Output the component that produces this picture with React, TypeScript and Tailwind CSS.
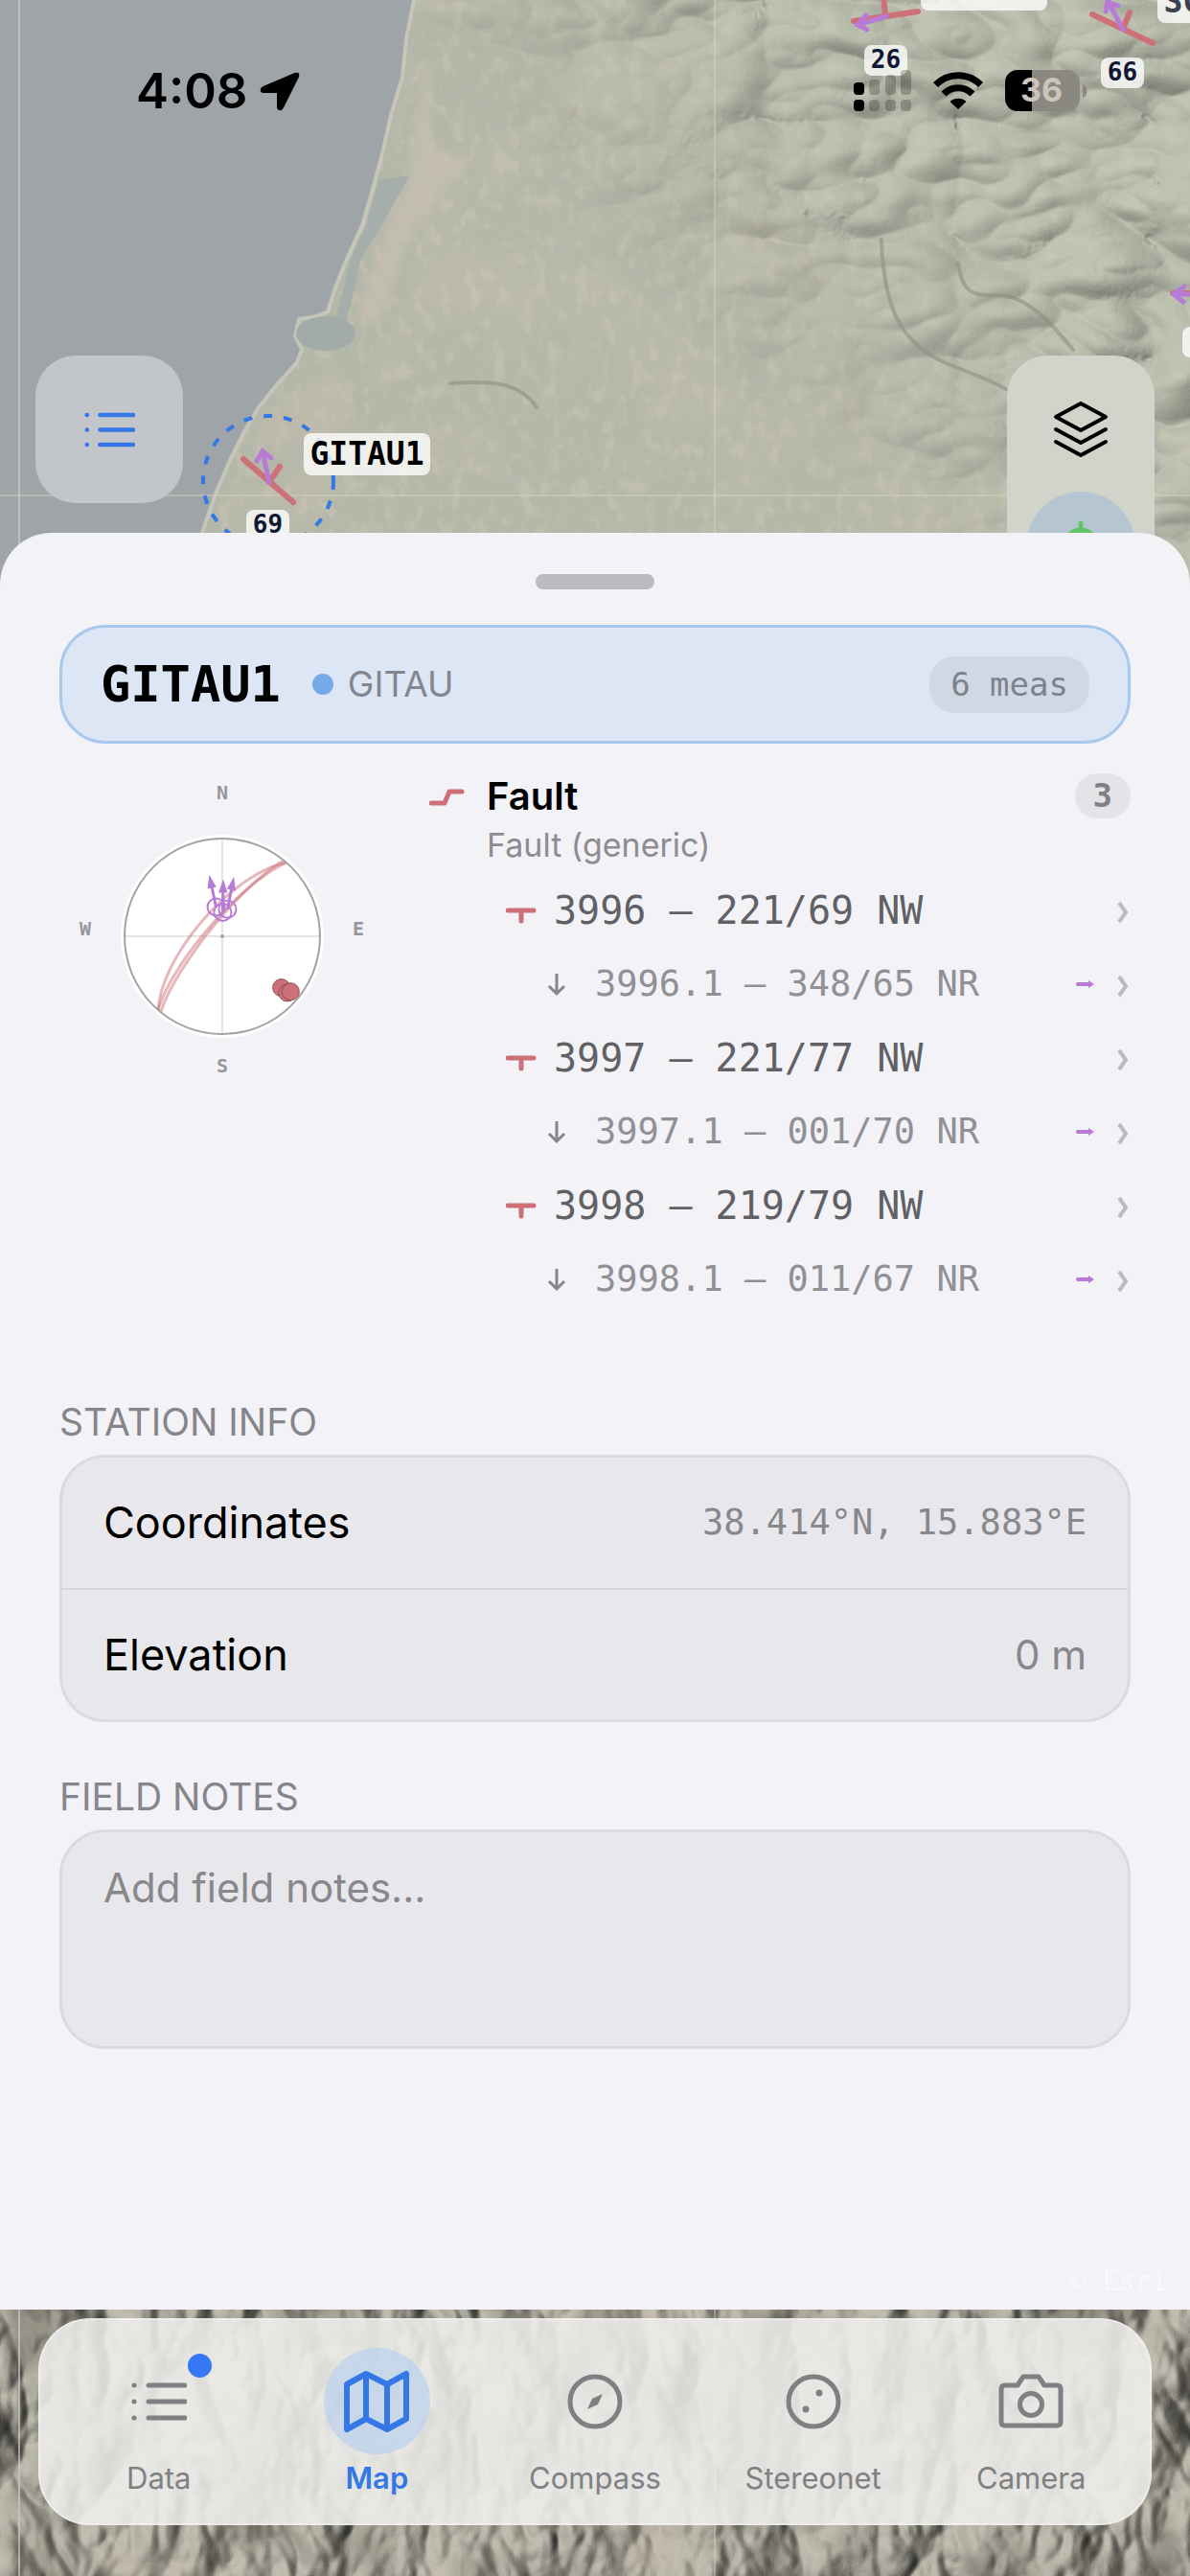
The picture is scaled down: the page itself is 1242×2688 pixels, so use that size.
import React, { useState } from "react";

type Orientation = { id: string; strike: number; dip: number; quadrant: string };
type Lineation = { id: string; trend: number; plunge: number; sense: string };

const planes: (Orientation & { line: Lineation })[] = [
  { id: "3996", strike: 221, dip: 69, quadrant: "NW", line: { id: "3996.1", trend: 348, plunge: 65, sense: "NR" } },
  { id: "3997", strike: 221, dip: 77, quadrant: "NW", line: { id: "3997.1", trend: 1, plunge: 70, sense: "NR" } },
  { id: "3998", strike: 219, dip: 79, quadrant: "NW", line: { id: "3998.1", trend: 11, plunge: 67, sense: "NR" } },
];

const RED = "#cd7077";
const PURPLE = "#b77bd6";
const BLUE = "#3478e8";
const MONO = "DejaVu Sans Mono, monospace";

const rad = (deg: number) => (deg * Math.PI) / 180;
const pad3 = (n: number) => String(n).padStart(3, "0");

// Equal-area (Schmidt) projection, lower hemisphere
const CENTER = 170;
const RADIUS = 102;

function project(n: number, e: number, d: number): [number, number] {
  const k = RADIUS / Math.sqrt(1 + d);
  return [CENTER + e * k, CENTER - n * k];
}

function projectLine(trend: number, plunge: number) {
  const h = Math.cos(rad(plunge));
  return project(Math.cos(rad(trend)) * h, Math.sin(rad(trend)) * h, Math.sin(rad(plunge)));
}

function greatCircle(strike: number, dip: number) {
  const points: string[] = [];
  const s = rad(strike);
  const a = rad(strike + 90);
  const d = rad(dip);
  for (let rake = 0; rake <= 180; rake += 5) {
    const c = Math.cos(rad(rake));
    const q = Math.sin(rad(rake));
    const [x, y] = project(
      c * Math.cos(s) + q * Math.cos(a) * Math.cos(d),
      c * Math.sin(s) + q * Math.sin(a) * Math.cos(d),
      q * Math.sin(d)
    );
    points.push(`${x.toFixed(1)},${y.toFixed(1)}`);
  }
  return points.join(" ");
}

function MiniStereonet() {
  return (
    <svg width="340" height="340" viewBox="0 0 340 340" className="shrink-0" role="img" aria-label="Stereonet">
      <circle cx={CENTER} cy={CENTER} r="106" fill="#fff" />
      <path d="M170 68V272M68 170H272" stroke="#e4e4e6" strokeWidth="2" />
      <circle cx={CENTER} cy={CENTER} r="2" fill="#a0a0a0" />
      {planes.map((p) => (
        <polyline key={p.id} points={greatCircle(p.strike, p.dip)} fill="none" stroke={RED} strokeWidth="3" opacity="0.5" />
      ))}
      <circle cx={CENTER} cy={CENTER} r={RADIUS} fill="none" stroke="#a3a3a5" strokeWidth="2" />
      {planes.map((p) => {
        const [x, y] = projectLine(p.strike - 90, 90 - p.dip);
        return <circle key={p.id} cx={x} cy={y} r="9" fill={RED} stroke="#8d4c52" strokeWidth="1" />;
      })}
      {planes.map(({ line }) => {
        const [x, y] = projectLine(line.trend, line.plunge);
        return (
          <g key={line.id} transform={`translate(${x} ${y})`} stroke={PURPLE} strokeWidth="2">
            <circle r="9" fill="none" />
            <g transform={`rotate(${line.trend})`}>
              <path d="M0 0V-26" strokeWidth="3" />
              <path d="M0 -33L-4 -21H4Z" fill={PURPLE} strokeWidth="1" />
            </g>
          </g>
        );
      })}
      <g fontFamily={MONO} fontWeight="700" fontSize="20" fill="#97969b" textAnchor="middle">
        <text x="170" y="27">N</text>
        <text x="312" y="169">E</text>
        <text x="170" y="312">S</text>
        <text x="27" y="169">W</text>
      </g>
    </svg>
  );
}

function MapTag({ x, y, text, w = 45, h = 32, size = 26, fill = "#0e1733" }: any) {
  return (
    <g>
      <rect x={x} y={y} width={w} height={h} rx="8" fill="#fff" fillOpacity="0.78" />
      <text x={x + w / 2} y={y + h / 2 + size * 0.32} fontFamily={MONO} fontWeight="700" fontSize={size} fill={fill} textAnchor="middle">
        {text}
      </text>
    </g>
  );
}

const COAST =
  "M432 0L424 40L420 80L408 120L399 160L391 190L378 235L362 270L350 300L342 325L330 330L312 333L308 350L315 365L310 378L290 400L270 425L255 450L240 480L225 515L213 550L180 640";

function MapBackdrop() {
  return (
    <svg className="absolute inset-0 h-full w-full" viewBox="0 0 1242 2688" preserveAspectRatio="xMidYMid slice" aria-hidden="true">
      <defs>
        <filter id="relief" x="0" y="0" width="100%" height="100%" colorInterpolationFilters="sRGB">
          <feTurbulence type="turbulence" baseFrequency="0.005 0.008" numOctaves="3" seed="11" />
          <feColorMatrix values="0 0 0 0 0  0 0 0 0 0  0 0 0 0 0  1 0 0 0 0" />
          <feGaussianBlur stdDeviation="1.5" />
          <feDiffuseLighting surfaceScale="26" diffuseConstant="1.1" lightingColor="#b9bdac">
            <feDistantLight azimuth="225" elevation="65" />
          </feDiffuseLighting>
        </filter>
        <filter id="ridges" x="0" y="0" width="100%" height="100%" colorInterpolationFilters="sRGB">
          <feTurbulence type="turbulence" baseFrequency="0.009 0.005" numOctaves="4" seed="5" />
          <feColorMatrix values="0 0 0 0 0  0 0 0 0 0  0 0 0 0 0  1 0 0 0 0" />
          <feGaussianBlur stdDeviation="2" />
          <feDiffuseLighting surfaceScale="36" diffuseConstant="1.1" lightingColor="#b4b1a5">
            <feDistantLight azimuth="200" elevation="58" />
          </feDiffuseLighting>
        </filter>
        <filter id="patches" x="0" y="0" width="100%" height="100%" colorInterpolationFilters="sRGB">
          <feTurbulence type="fractalNoise" baseFrequency="0.008" numOctaves="4" seed="8" />
          <feColorMatrix values="0 0 0 0 0.8  0 0 0 0 0.75  0 0 0 0 0.7  4 0 0 0 -1.8" />
        </filter>
        <filter id="shade" x="0" y="0" width="100%" height="100%" colorInterpolationFilters="sRGB">
          <feTurbulence type="fractalNoise" baseFrequency="0.012 0.009" numOctaves="3" seed="21" />
          <feColorMatrix values="0 0 0 0 0.36  0 0 0 0 0.35  0 0 0 0 0.31  5 0 0 0 -2.5" />
        </filter>
        <filter id="fields" x="0" y="0" width="100%" height="100%" colorInterpolationFilters="sRGB">
          <feTurbulence type="fractalNoise" baseFrequency="0.07 0.05" numOctaves="3" seed="3" />
          <feColorMatrix values="0 0 0 0 0.82  0 0 0 0 0.78  0 0 0 0 0.73  5 0 0 0 -2.6" />
        </filter>
        <filter id="soft">
          <feGaussianBlur stdDeviation="5" />
        </filter>
        <linearGradient id="eastFade" x1="0.55" x2="0.85" y1="0.5" y2="0.35">
          <stop offset="0" stopColor="#000" />
          <stop offset="1" stopColor="#fff" />
        </linearGradient>
        <mask id="east">
          <rect width="1242" height="640" fill="url(#eastFade)" />
        </mask>
        <clipPath id="land">
          <path d={`${COAST}H1242V0Z`} />
        </clipPath>
      </defs>

      <rect width="1242" height="2688" fill="#9fa4a9" />
      <g clipPath="url(#land)">
        <rect width="1242" height="640" fill="#b3b8a9" />
        <rect width="1242" height="640" filter="url(#patches)" opacity="0.3" />
        <rect width="1242" height="640" filter="url(#fields)" opacity="0.4" />
        <g mask="url(#east)">
          <rect x="-20" y="-20" width="1282" height="680" filter="url(#relief)" opacity="0.5" />
        </g>
        <path d="M445 60L425 190L385 290L372 330L395 340L430 240L490 170L450 150L448 60Z" fill="#c8bfb2" opacity="0.7" filter="url(#soft)" />
        <path d="M270 440L350 380L370 430L330 460L260 470Z" fill="#c6bcae" opacity="0.5" filter="url(#soft)" />
        <g fill="none" stroke="#8e9082" strokeWidth="4" opacity="0.6" strokeLinecap="round">
          <path d="M920 250C922 320 940 360 990 380S1040 400 1060 412" />
          <path d="M1000 275C1004 300 1010 310 1040 308S1100 340 1120 365" />
          <path d="M470 400C520 396 545 402 560 425" />
        </g>
      </g>
      <path d={COAST} fill="none" stroke="#cdcabd" strokeWidth="4" opacity="0.8" />
      <path d="M395 188L428 183L400 232L376 272L362 335H350L366 270L382 235Z" fill="#a5aeaa" />
      <ellipse cx="340" cy="348" rx="31" ry="18" fill="#a3aba9" />

      <g>
        <rect y="2300" width="1242" height="388" fill="#b0aea1" />
        <rect x="-20" y="2280" width="1282" height="428" filter="url(#ridges)" opacity="0.75" />
        <rect y="2300" width="1242" height="388" filter="url(#shade)" opacity="0.4" />
        <rect y="2300" width="1242" height="388" filter="url(#patches)" opacity="0.35" />
      </g>

      <path d="M20 0V2688" stroke="#c9cbc9" strokeWidth="2" opacity="0.7" />
      <path d="M746 0V2688M0 517H1242" stroke="#d6d5bd" strokeWidth="1" opacity="0.9" />

      <g fill="none" strokeLinecap="round">
        <circle cx="280" cy="502" r="68" stroke={BLUE} strokeWidth="4" strokeDasharray="9 12" strokeLinecap="butt" />
        <g stroke={RED} strokeWidth="6">
          <path d="M254 479L306 524M281 503L292 487" />
          <path d="M891 22L958 12M924 16L922 -4" />
          <path d="M1140 15L1203 45M1172 30L1179 13" />
          <path d="M1224 306H1250" />
        </g>
        <g stroke={PURPLE} strokeWidth="5">
          <path d="M281 503L274 471M268 481L274 471L283 478" />
          <path d="M925 17L895 26M904 16L895 26L905 31" />
          <path d="M1172 31L1157 2M1154 12L1156 2L1167 6" />
          <path d="M1250 307H1225M1236 299L1225 307L1235 315" />
        </g>
      </g>
      <MapTag x={317} y={452} w={132} h={44} size={33} fill="#000" text="GITAU1" />
      <MapTag x={257} y={532} text="69" />
      <MapTag x={902} y={47} text="26" />
      <MapTag x={1149} y={60} text="66" />
      <MapTag x={961} y={-33} w={132} h={44} size={33} text="" />
      <MapTag x={1208} y={-20} w={132} h={44} size={33} text="SCILL1" fill="#3a4052" />
      <MapTag x={1234} y={341} text="" />
    </svg>
  );
}

function StatusBar() {
  return (
    <header className="flex items-center justify-between pt-[63px] pr-[107px] pl-[142px]">
      <div className="flex items-center gap-3">
        <span className="text-[51px] leading-[64px] font-semibold">4:08</span>
        <svg width="42" height="42" viewBox="0 0 42 42">
          <path d="M37 3L4 17C1 18.500 1 22 4 22H19V37C19 41 22.500 41 24 38L40 6C41 3 40 2 37 3Z" stroke="#000" strokeWidth="2" strokeLinejoin="round" />
        </svg>
      </div>
      <div className="flex items-center gap-[23px]">
        <svg width="60" height="44" viewBox="0 0 60 44">
          <g>
            <rect x="0" y="13" width="11" height="13" rx="4" />
            <rect x="0" y="31" width="11" height="12" rx="4" />
          </g>
          <g fillOpacity="0.22">
            <rect x="16" y="10" width="11" height="16" rx="4" />
            <rect x="33" y="5" width="11" height="21" rx="4" />
            <rect x="49" y="0" width="11" height="26" rx="4" />
            <rect x="16" y="31" width="11" height="12" rx="4" />
            <rect x="33" y="31" width="11" height="12" rx="4" />
            <rect x="49" y="31" width="11" height="12" rx="4" />
          </g>
        </svg>
        <svg width="52" height="40" viewBox="0 0 52 40">
          <path d="M2.500 13.500A33 33 0 0 1 49.500 13.500" fill="none" stroke="#000" strokeWidth="7" />
          <path d="M11 23A21 21 0 0 1 41 23" fill="none" stroke="#000" strokeWidth="7" />
          <path d="M17.500 31A13 13 0 0 1 34.500 31L26 39Z" />
        </svg>
        <svg width="86" height="44" viewBox="0 0 86 44">
          <clipPath id="battery">
            <rect width="78" height="43" rx="13" />
          </clipPath>
          <g clipPath="url(#battery)">
            <rect width="78" height="43" fill="#8b8881" />
            <rect width="28" height="43" />
          </g>
          <path d="M81 15C87 17 87 27 81 29Z" fill="#8b8881" />
          <text x="38" y="33" fontFamily="Inter, sans-serif" fontWeight="700" fontSize="34" fill="#cdc5bc" textAnchor="middle">
            36
          </text>
        </svg>
      </div>
    </header>
  );
}

function ListIcon({ size = 58 }: { size?: number }) {
  return (
    <svg width={size} height={size} viewBox="0 0 58 58" stroke="currentColor" strokeWidth="5" strokeLinecap="round" fill="none">
      <path d="M18 12H56M18 29H56M18 46H56M3 12H3.100M3 29H3.100M3 46H3.100" />
    </svg>
  );
}

function MapControls() {
  return (
    <div className="flex items-start justify-between px-[37px]">
      <button aria-label="Station list" className="flex size-[154px] items-center justify-center rounded-[42px] bg-[#c2c6ca] text-[#3478e8]">
        <ListIcon size={53} />
      </button>
      <div className="flex h-[300px] w-[154px] flex-col items-center rounded-[42px] bg-[#d2d4cb]">
        <button aria-label="Layers" className="flex h-[142px] w-full shrink-0 items-center justify-center pt-3">
          <svg width="58" height="60" viewBox="0 0 58 60" fill="none" stroke="#000" strokeWidth="4" strokeLinejoin="round" strokeLinecap="round">
            <path d="M29 3L55 17L29 31L3 17ZM3 30L29 44L55 30M3 43L29 57L55 43" />
          </svg>
        </button>
        <button aria-label="Locate me" className="flex size-[114px] shrink-0 items-center justify-center rounded-full bg-[#b5c6d2]">
          <svg width="54" height="54" viewBox="0 0 54 54" fill="none" stroke="#63c466" strokeWidth="5" strokeLinecap="round">
            <circle cx="27" cy="27" r="17" />
            <path d="M27 3V14M27 40V51M3 27H14M40 27H51" />
          </svg>
        </button>
      </div>
    </div>
  );
}

function Chevron() {
  return (
    <svg width="16" height="28" viewBox="0 0 16 28" fill="none" stroke="#bbbabf" strokeWidth="4">
      <path d="M4 6L11 16L4 26" />
    </svg>
  );
}

function FaultGroup() {
  return (
    <section className="min-w-0 flex-1">
      <div className="flex h-[47px] items-center">
        <svg width="60" height="36" viewBox="0 0 60 36" fill="none" stroke={RED} strokeWidth="5" strokeLinecap="round" strokeLinejoin="round">
          <path d="M2 25H16L21 13H34" />
        </svg>
        <h2 className="text-[40px] leading-[47px] font-semibold">Fault</h2>
        <span className="ml-auto rounded-full bg-[#e4e3e7] px-[19px] font-['DejaVu_Sans_Mono',monospace] text-[34px] leading-[47px] font-bold text-[#808085]">3</span>
      </div>
      <p className="h-[57px] pl-[60px] text-[34px] leading-[56px] text-[#8d8c91]">Fault (generic)</p>
      <ul className="font-['DejaVu_Sans_Mono',monospace]">
        {planes.map((p) => (
          <React.Fragment key={p.id}>
            <li>
              <button className="flex h-[77px] w-full items-center pl-[80px] text-left text-[40px] text-[#606065]">
                <svg width="50" height="30" viewBox="0 0 50 30" fill="none" stroke={RED} strokeWidth="5" strokeLinecap="round">
                  <path d="M2 15H29M16 15V26" />
                </svg>
                {p.id} – {pad3(p.strike)}/{p.dip} {p.quadrant}
                <span className="ml-auto">
                  <Chevron />
                </span>
              </button>
            </li>
            <li>
              <button className="flex h-[77px] w-full items-center pl-[123px] text-left text-[37px] text-[#909095]">
                <svg width="50" height="28" viewBox="0 0 50 28" fill="none" stroke="#85858a" strokeWidth="3">
                  <path d="M10 3V24M2 16L10 24L18 16" />
                </svg>
                {p.line.id} – {pad3(p.line.trend)}/{p.line.plunge} {p.line.sense}
                <span className="ml-auto flex items-center gap-[22px]">
                  <svg width="20" height="10" viewBox="0 0 20 10" fill={PURPLE}>
                    <path d="M2 3H14V1L20 5L14 9V7H2Q0 5 2 3Z" />
                  </svg>
                  <Chevron />
                </span>
              </button>
            </li>
          </React.Fragment>
        ))}
      </ul>
    </section>
  );
}

function StationSheet() {
  const [notes, setNotes] = useState("");
  return (
    <main className="relative flex flex-1 flex-col rounded-t-[54px] bg-[#f3f2f7] px-[62px] pt-[43px]">
      <div className="mx-auto h-4 w-[124px] rounded-full bg-[#bcbbc0]" />

      <div className="mt-[37px] flex h-[124px] items-center rounded-[48px] border-[3px] border-[#a9c8ee] bg-[#dce6f5] px-[40px]">
        <h1 className="font-['DejaVu_Sans_Mono',monospace] text-[52px] leading-[60px] font-bold">GITAU1</h1>
        <span className="ml-[33px] size-[22px] rounded-full bg-[#74aae8]" />
        <span className="ml-[15px] text-[37px] text-[#83868f]">GITAU</span>
        <span className="ml-auto rounded-[26px] bg-[#cfd8e5] px-[22px] font-['DejaVu_Sans_Mono',monospace] text-[34px] leading-[59px] text-[#7d828b]">6 meas</span>
      </div>

      <div className="mt-[31px] flex gap-[46px]">
        <MiniStereonet />
        <FaultGroup />
      </div>

      <section className="mt-[87px]">
        <h3 className="mb-[10px] text-[39px] leading-[48px] text-[#86858a]">STATION INFO</h3>
        <dl className="rounded-[48px] border-[3px] border-[#dbdade] bg-[#e8e7eb]">
          <div className="flex h-[136px] items-center justify-between px-[43px]">
            <dt className="text-[45px]">Coordinates</dt>
            <dd className="font-['DejaVu_Sans_Mono',monospace] text-[37px] text-[#88878c]">38.414°N, 15.883°E</dd>
          </div>
          <div className="flex h-[137px] items-center justify-between border-t-2 border-[#d6d5d9] px-[43px]">
            <dt className="text-[45px]">Elevation</dt>
            <dd className="text-[42px] text-[#88878c]">0 m</dd>
          </div>
        </dl>
      </section>

      <section className="mt-[54px]">
        <label htmlFor="notes" className="mb-[10px] block text-[39px] leading-[48px] text-[#86858a]">
          FIELD NOTES
        </label>
        <textarea
          id="notes"
          value={notes}
          onChange={(e) => setNotes(e.target.value)}
          placeholder="Add field notes..."
          className="block h-[229px] w-full resize-none rounded-[48px] border-[3px] border-[#dbdade] bg-[#e8e7eb] px-[43px] pt-[30px] text-[42px] leading-[56px] outline-none placeholder:text-[#88878c]"
        />
      </section>

      <small className="mt-auto -mr-[38px] mb-3 self-end font-['DejaVu_Sans_Mono',monospace] text-[28px] leading-[34px] text-[#f9f9fb]">© Esri</small>
    </main>
  );
}

const tabs = [
  { name: "Data", icon: <ListIcon size={58} />, badge: true },
  {
    name: "Map",
    icon: (
      <svg width="70" height="66" viewBox="0 0 70 66" fill="none" stroke="currentColor" strokeWidth="6" strokeLinejoin="round">
        <path d="M4 15L24 4L46 15L66 4V51L46 62L24 51L4 62ZM24 4V51M46 15V62" />
      </svg>
    ),
  },
  {
    name: "Compass",
    icon: (
      <svg width="60" height="60" viewBox="0 0 60 60" fill="none" stroke="currentColor" strokeWidth="5">
        <circle cx="30" cy="30" r="26" />
        <path d="M38 22L33 33L22 38L27 27Z" fill="currentColor" stroke="none" />
      </svg>
    ),
  },
  {
    name: "Stereonet",
    icon: (
      <svg width="60" height="60" viewBox="0 0 60 60" fill="none" stroke="currentColor" strokeWidth="5">
        <circle cx="30" cy="30" r="26" />
        <circle cx="36" cy="21" r="3.500" fill="currentColor" stroke="none" />
        <circle cx="22" cy="38" r="3.500" fill="currentColor" stroke="none" />
      </svg>
    ),
  },
  {
    name: "Camera",
    icon: (
      <svg width="68" height="60" viewBox="0 0 68 60" fill="none" stroke="currentColor" strokeWidth="5" strokeLinejoin="round">
        <path d="M7 13H20L26 4H42L48 13H61Q65 13 65 17V51Q65 55 61 55H7Q3 55 3 51V17Q3 13 7 13Z" />
        <circle cx="34" cy="33" r="11.500" />
      </svg>
    ),
  },
];

function TabBar() {
  const [active, setActive] = useState("Map");
  return (
    <nav className="relative mx-10 mt-[9px] mb-[53px] grid h-[216px] grid-cols-5 rounded-[54px] border-2 border-white/30 bg-[#eeeeec]/88 px-[10px]">
      {tabs.map((tab) => (
        <button
          key={tab.name}
          onClick={() => setActive(tab.name)}
          className={active === tab.name ? "flex flex-col items-center pt-[29px] font-semibold text-[#3478e8]" : "flex flex-col items-center pt-[29px] text-[#808084]"}
        >
          <span className={active === tab.name ? "relative flex size-[111px] items-center justify-center rounded-full bg-[#b4cff0]/60" : "relative flex size-[111px] items-center justify-center"}>
            {tab.icon}
            {tab.badge && <span className="absolute top-[6px] right-0 size-[25px] rounded-full bg-[#3478f6]" />}
          </span>
          <span className="mt-[6px] text-[31px] leading-[38px]">{tab.name}</span>
        </button>
      ))}
    </nav>
  );
}

export default function App() {
  return (
    <div className="relative flex min-h-screen flex-col overflow-hidden font-[Inter,sans-serif] text-black">
      <MapBackdrop />
      <div className="relative flex h-[556px] flex-col gap-[244px]">
        <StatusBar />
        <MapControls />
      </div>
      <StationSheet />
      <TabBar />
    </div>
  );
}
